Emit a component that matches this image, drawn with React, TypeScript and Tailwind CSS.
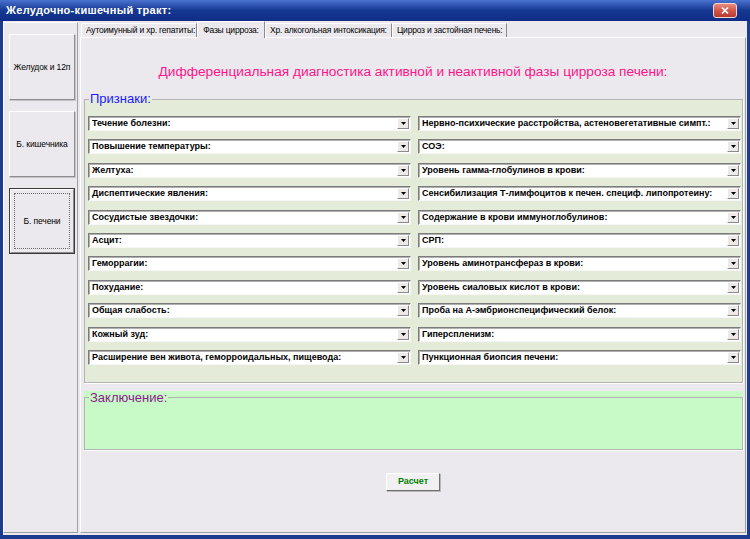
import React from 'react'

// Признаки: левая и правая колонки
const leftSigns = [
  'Течение болезни:',
  'Повышение температуры:',
  'Желтуха:',
  'Диспептические явления:',
  'Сосудистые звездочки:',
  'Асцит:',
  'Геморрагии:',
  'Похудание:',
  'Общая слабость:',
  'Кожный зуд:',
  'Расширение вен живота, геморроидальных, пищевода:',
]

const rightSigns = [
  'Нервно-психические расстройства, астеновегетативные симпт.:',
  'СОЭ:',
  'Уровень гамма-глобулинов в крови:',
  'Сенсибилизация Т-лимфоцитов к печен. специф. липопротеину:',
  'Содержание в крови иммуноглобулинов:',
  'СРП:',
  'Уровень аминотрансфераз в крови:',
  'Уровень сиаловых кислот в крови:',
  'Проба на А-эмбрионспецифический белок:',
  'Гиперспленизм:',
  'Пункционная биопсия печени:',
]

const tabs = [
  { label: 'Аутоимунный и хр. гепатиты:', w: 'w-[116px]', active: false },
  { label: 'Фазы цирроза:', w: 'w-[68px]', active: true },
  { label: 'Хр. алкогольная интоксикация:', w: 'w-[127px]', active: false },
  { label: 'Цирроз и застойная печень:', w: 'w-[115px]', active: false },
]

function Combo({ label }: { label: string }) {
  return (
    <div className="flex h-[15px] border border-t-[#7b7b7b] border-l-[#7b7b7b] border-b-[#f6f6f6] border-r-[#f6f6f6] bg-white shadow-[inset_1px_1px_0_#b0b0b0]">
      <div className="flex-1 overflow-hidden whitespace-nowrap pl-[3px] text-[9px] font-bold leading-[13px] text-black">
        {label}
      </div>
      <div className="my-[1px] mr-[1px] flex w-[12px] items-center justify-center border border-t-white border-l-white border-b-[#8a8a8a] border-r-[#8a8a8a] bg-[#ece9e6]">
        <svg width="5" height="3" viewBox="0 0 5 3">
          <path d="M0 0h5L2.5 3z" fill="#000" />
        </svg>
      </div>
    </div>
  )
}

function SideButton({ label, focused }: { label: string; focused?: boolean }) {
  if (focused) {
    return (
      <div className="h-[66px] w-[66px] border border-[#3a3a3a] bg-[#ebe9ed]">
        <div className="flex h-full w-full items-center justify-center border border-t-white border-l-white border-b-[#8a8a8a] border-r-[#8a8a8a]">
          <div className="flex h-[56px] w-[56px] items-center justify-center whitespace-nowrap border border-dotted border-[#6a6a6a] text-[8.5px] tracking-[-0.1px] text-black">
            {label}
          </div>
        </div>
      </div>
    )
  }
  return (
    <div className="flex h-[66px] w-[66px] items-center justify-center whitespace-nowrap border border-t-white border-l-white border-b-[#8e8e8e] border-r-[#8e8e8e] bg-[#ebe9ed] shadow-[1px_1px_0_#c4c2c6] text-[8.5px] tracking-[-0.1px] text-black">
      {label}
    </div>
  )
}

export default function App() {
  return (
    <div className="flex h-[539px] w-[750px] flex-col overflow-hidden font-['Liberation_Sans',Arial,sans-serif]">
      {/* Заголовок окна */}
      <div className="flex h-[21px] items-center justify-between bg-gradient-to-b from-[#4a72cf] via-[#153892] to-[#0f2d86] pl-[6px] pr-[13px]">
        <span className="text-[11px] font-bold tracking-[0.3px] text-white">Желудочно-кишечный тракт:</span>
        <div className="flex h-[15px] w-[24px] items-center justify-center rounded-[3px] border border-[#f3d6d2] bg-gradient-to-b from-[#e98b7f] via-[#d2574a] to-[#b93a2e]">
          <svg width="8" height="7" viewBox="0 0 8 7">
            <path d="M1 0.5l6 6M7 0.5l-6 6" stroke="#fff" strokeWidth="1.6" />
          </svg>
        </div>
      </div>

      <div className="flex flex-1 border-x-[3px] border-b-[4px] border-[#1c3c8e] bg-[#ebe9ed]">
        {/* Левая панель */}
        <div className="mb-[2px] mt-[1px] flex w-[75px] flex-col gap-[11px] border border-t-white border-l-white border-b-[#a0a0a0] border-r-[#a0a0a0] pl-[5px] pt-[11px]">
          <SideButton label="Желудок и 12п" />
          <SideButton label="Б. кишечника" />
          <SideButton label="Б. печени" focused />
        </div>

        {/* Правая часть с вкладками */}
        <div className="flex flex-1 flex-col">
          <div className="flex h-[16px] items-end pl-[3px]">
            {tabs.map(t =>
              t.active ? (
                <div
                  key={t.label}
                  className={`${t.w} relative z-10 -mb-[1px] flex h-[17px] items-center justify-center overflow-hidden whitespace-nowrap border-l border-t border-r border-l-white border-t-white border-r-[#8a8a8a] bg-[#ebe9ed] text-[8.5px] tracking-[-0.2px] text-black`}
                >
                  {t.label}
                </div>
              ) : (
                <div
                  key={t.label}
                  className={`${t.w} flex h-[14px] items-center overflow-hidden whitespace-nowrap border-l border-t border-r border-l-white border-t-white border-r-[#8a8a8a] pl-[4px] text-[8.5px] tracking-[-0.2px] text-black`}
                >
                  {t.label}
                </div>
              )
            )}
          </div>

          <div className="mb-[2px] ml-[2px] mr-[1px] flex flex-1 flex-col border border-t-white border-l-white border-b-[#a0a0a0] border-r-[#a0a0a0]">
            <div className="mt-[25px] h-[18px] text-center text-[13.7px] leading-[18px] text-[#ff148c]">
              Дифференциальная диагностика активной и неактивной фазы цирроза печени:
            </div>

            {/* Признаки */}
            <fieldset className="ml-[3px] mr-[2px] mt-[11px] border border-[#b4b4b4] bg-[#e4ebd8] shadow-[1px_1px_0_#ffffff]">
              <legend className="ml-[4px] px-[1px] text-[13px] leading-[14px] text-[#1a1aff]">Признаки:</legend>
              <div className="grid grid-cols-2 gap-x-[7px] gap-y-[8.4px] pb-[17px] pl-[3px] pr-[1px] pt-[10px]">
                {leftSigns.map((l, i) => (
                  <React.Fragment key={l}>
                    <Combo label={l} />
                    <Combo label={rightSigns[i]} />
                  </React.Fragment>
                ))}
              </div>
            </fieldset>

            {/* Заключение */}
            <div className="ml-[3px] mr-[2px] mt-[8px] h-[59px] bg-[#c8fac8]">
              <fieldset className="h-full border border-[#b4b4b4] shadow-[1px_1px_0_#ffffff]">
                <legend className="ml-[4px] px-[1px] text-[13px] leading-[14px] text-[#8b1a8b]">Заключение:</legend>
              </fieldset>
            </div>

            <div className="mt-[23px] flex justify-center">
              <div className="flex h-[18px] w-[54px] items-center justify-center border border-t-white border-l-white border-b-[#707070] border-r-[#707070] bg-[#f1f0f2] shadow-[1px_1px_0_#b9b9b9] text-[9px] font-bold text-[#008000]">
                Расчет
              </div>
            </div>
          </div>
        </div>
      </div>
    </div>
  )
}
